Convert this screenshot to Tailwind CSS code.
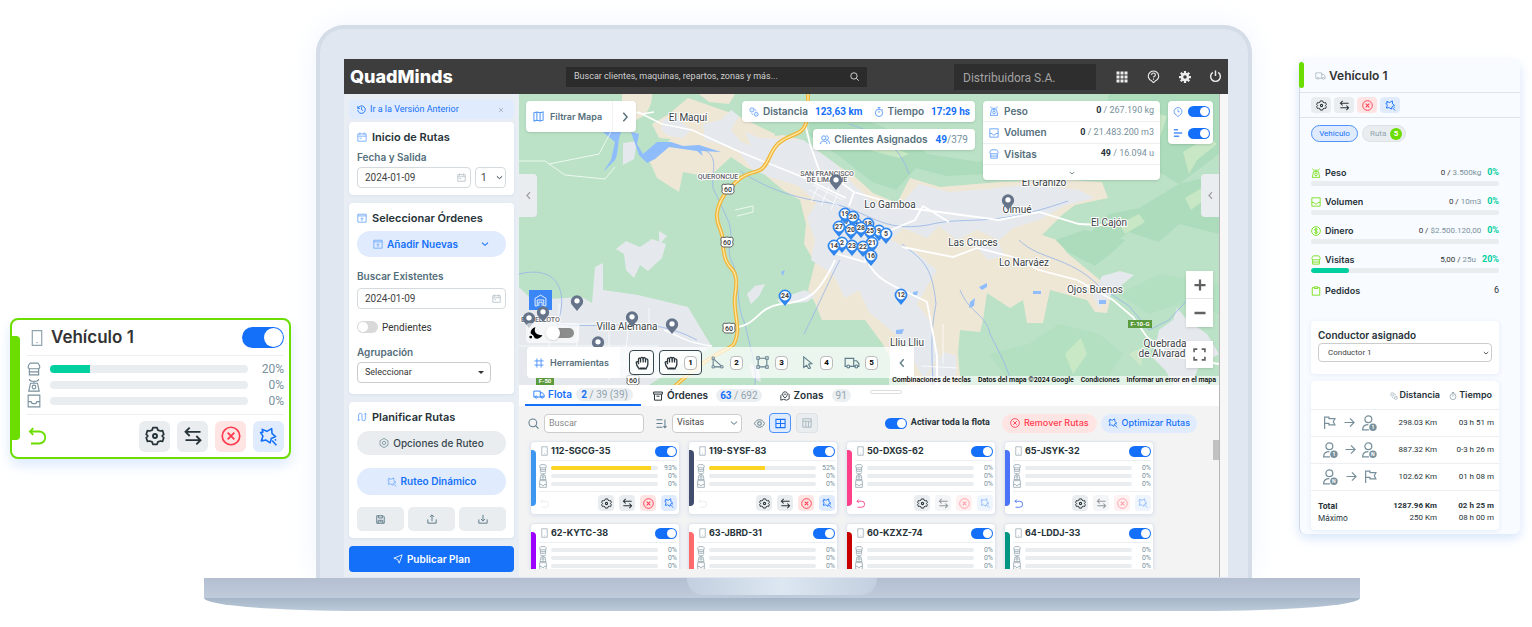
<!doctype html>
<html lang="es">

<head>
  <meta charset="UTF-8" />
  <meta name="viewport" content="width=device-width, initial-scale=1.0" />
  <title>QuadMinds</title>
  <script src="https://cdn.jsdelivr.net/npm/@tailwindcss/browser@4"></script>
</head>

<body class="bg-white font-['Inter',sans-serif] text-[#263238] overflow-x-hidden">

  <!-- icon sprite -->
  <svg class="hidden">
    <defs>
      <symbol id="phone" viewBox="0 0 14 20"><path d="M1.5 1.5h11v17h-11zM6.3 15.5h1.4" fill="none" stroke="currentColor" stroke-width="1.4"/></symbol>
      <symbol id="store" viewBox="0 0 24 24"><path d="M5.500 2h13c2 2 3.500 4 3.500 6.500 0 2-1.500 3-3 3H5c-1.500 0-3-1-3-3C2 6 3.500 4 5.500 2zM4 11.500V22h16V11.500M4 17h16" fill="none" stroke="currentColor" stroke-width="1.9"/></symbol>
      <symbol id="scale" viewBox="0 0 24 24"><path d="M4 1.500c0 3 2 4 8 4s8-1 8-4M12 5.500V9M6 9h12l3 13.500H3z" fill="none" stroke="currentColor" stroke-width="1.900"/><circle cx="12" cy="15.500" r="3.200" fill="none" stroke="currentColor" stroke-width="1.900"/></symbol>
      <symbol id="box" viewBox="0 0 24 24"><path d="M2 2h20v20H2zM2 13h5c1 5 9 5 10 0h5" fill="none" stroke="currentColor" stroke-width="1.9"/></symbol>
      <symbol id="undo" viewBox="0 0 24 24"><path d="M7 1.5L2.5 6 7 10.5M3 6h12a8 8 0 010 16H4" fill="none" stroke="currentColor" stroke-width="2.4"/></symbol>
      <symbol id="gear" viewBox="0 0 24 24"><path d="M9.5 2h5l1 3 3 1 2.500-.5 1.500 4.500-2 2 2 2-1.500 4.500L18.500 18l-3 1-1 3h-5l-1-3-3-1-2.500.5L1.500 14l2-2-2-2L3 5.500l2.500.5 3-1z" fill="none" stroke="currentColor" stroke-width="2.1" stroke-linejoin="round"/><circle cx="12" cy="12" r="2.4" fill="none" stroke="currentColor" stroke-width="2.3"/></symbol>
      <symbol id="swap" viewBox="0 0 24 24"><path d="M21 7H3M8 2L3 7l5 5M3 17h18M16 12l5 5-5 5" fill="none" stroke="currentColor" stroke-width="2.2"/></symbol>
      <symbol id="cross" viewBox="0 0 24 24"><path d="M8 8l8 8M16 8l-8 8" stroke="currentColor" stroke-width="2.2"/><circle cx="12" cy="12" r="10.5" fill="none" stroke="currentColor" stroke-width="2"/></symbol>
      <symbol id="wand" viewBox="0 0 24 24"><path d="M4 3l6 2.500L16 2l.5 6.500L21 12l-5.500 2.500L14 20l-5-3.500-6 1L5 11.500 2 7l3-.5zM16.500 17l5.500 6M20 15.500l1.500 1.500" fill="none" stroke="currentColor" stroke-width="2" stroke-linejoin="round"/></symbol>
      <symbol id="history" viewBox="0 0 24 24"><path d="M2 3v6h6M3 8a10 10 0 11-1 5M12 6v6l4 3" fill="none" stroke="currentColor" stroke-width="2.3"/></symbol>
      <symbol id="close" viewBox="0 0 24 24"><path d="M4 4l16 16M20 4L4 20" stroke="currentColor" stroke-width="2.8"/></symbol>
      <symbol id="cal" viewBox="0 0 24 24"><path d="M2 4.5h20V22H2zM2 10h20M7 1v6M17 1v6M6 15h5" fill="none" stroke="currentColor" stroke-width="2.1"/></symbol>
      <symbol id="order" viewBox="0 0 24 24"><path d="M2 3h20v19H2zM2 7h20M12 19v-7M8.5 14.5L12 11l3.500 3.500" fill="none" stroke="currentColor" stroke-width="2.1"/></symbol>
      <symbol id="down" viewBox="0 0 24 24"><path d="M3 8l9 8 9-8" fill="none" stroke="currentColor" stroke-width="3.2"/></symbol>
      <symbol id="left" viewBox="0 0 24 24"><path d="M16 3l-8 9 8 9" fill="none" stroke="currentColor" stroke-width="3.4"/></symbol>
      <symbol id="right" viewBox="0 0 24 24"><path d="M8 2l9 10-9 10" fill="none" stroke="currentColor" stroke-width="3.4"/></symbol>
      <symbol id="route" viewBox="0 0 24 24"><path d="M4 21V7a4 4 0 018 0v10a4 4 0 008 0V3M1 18l3 3 3-3M17 6l3-3 3 3" fill="none" stroke="currentColor" stroke-width="2.2"/></symbol>
      <symbol id="hex" viewBox="0 0 24 24"><path d="M12 1l9.500 5.500v11L12 23l-9.500-5.500v-11z" fill="none" stroke="currentColor" stroke-width="2"/><circle cx="12" cy="12" r="4" fill="none" stroke="currentColor" stroke-width="2"/></symbol>
      <symbol id="save" viewBox="0 0 24 24"><path d="M2 2h17l3 3v17H2zM7 2v6h10V2M6 22v-8h12v8M9 18h6" fill="none" stroke="currentColor" stroke-width="2.6"/></symbol>
      <symbol id="upload" viewBox="0 0 24 24"><path d="M2 13v9h20v-9M12 17V3M7 7l5-5 5 5" fill="none" stroke="currentColor" stroke-width="2.4"/></symbol>
      <symbol id="download" viewBox="0 0 24 24"><path d="M2 13v9h20v-9M12 2v14M7 12l5 5 5-5" fill="none" stroke="currentColor" stroke-width="2.4"/></symbol>
      <symbol id="send" viewBox="0 0 24 24"><path d="M2 10L22 2l-7 20-4-9z" fill="none" stroke="currentColor" stroke-width="2" stroke-linejoin="round"/></symbol>
      <symbol id="map" viewBox="0 0 24 24"><path d="M2 4l6.500-2 7 2L22 2v18l-6.500 2-7-2L2 22zM8.500 2v18M15.500 4v18" fill="none" stroke="currentColor" stroke-width="2.2"/></symbol>
      <symbol id="nodes" viewBox="0 0 24 24"><g fill="none" stroke="currentColor" stroke-width="1.9"><circle cx="7" cy="7" r="5"/><circle cx="17.500" cy="17.500" r="4.500"/><path d="M7 6v2M17.500 16.500v2M6 15l4 4M13 5l5 5"/></g></symbol>
      <symbol id="watch" viewBox="0 0 24 24"><circle cx="12" cy="14" r="8.800" fill="none" stroke="currentColor" stroke-width="2"/><path d="M12 14V9M8.500 1.500h7M19 5l2 2M12 2v3" fill="none" stroke="currentColor" stroke-width="2"/></symbol>
      <symbol id="users" viewBox="0 0 24 24"><g fill="none" stroke="currentColor" stroke-width="2.1"><circle cx="9" cy="7" r="5"/><path d="M1 22c0-10 16-10 16 0M15 2c7 0 7 10 0 10 5 0 8 4 8 9"/></g></symbol>
      <symbol id="pinclock" viewBox="0 0 24 24"><path d="M12 23l-4-3.500a9.500 9.500 0 118 0zM12 6v5.500h4" fill="none" stroke="currentColor" stroke-width="2"/></symbol>
      <symbol id="bars" viewBox="0 0 24 24"><path d="M2 4h10M2 12h20M2 20h13" stroke="currentColor" stroke-width="3.5"/></symbol>
      <symbol id="apps" viewBox="0 0 24 24"><path d="M1 4h6M9 4h6M17 4h6M1 12h6M9 12h6M17 12h6M1 20h6M9 20h6M17 20h6" stroke="currentColor" stroke-width="6"/></symbol>
      <symbol id="help" viewBox="0 0 24 24"><path d="M12 23.500l-3-3a9.500 9.500 0 116 0zM8.500 9c0-4.500 7-4.500 7 0 0 2.500-3.500 2.500-3.500 5M12 15.500V18" fill="none" stroke="currentColor" stroke-width="2"/></symbol>
      <symbol id="cog" viewBox="0 0 24 24"><path d="M12 0v24M0 12h24M3.500 3.500l17 17M20.500 3.500l-17 17" stroke="currentColor" stroke-width="4.500"/><circle cx="12" cy="12" r="6" fill="none" stroke="currentColor" stroke-width="5"/><circle cx="12" cy="12" r="3.500" fill="#3d3d3d"/></symbol>
      <symbol id="power" viewBox="0 0 24 24"><path d="M7 4.500a9 9 0 1010 0M12 1v10" fill="none" stroke="currentColor" stroke-width="2.700"/></symbol>
      <symbol id="search" viewBox="0 0 24 24"><circle cx="10.500" cy="10.500" r="8.500" fill="none" stroke="currentColor" stroke-width="2.2"/><path d="M17 17l6 6" stroke="currentColor" stroke-width="2.4"/></symbol>
      <symbol id="hand" viewBox="0 0 24 24"><path d="M7 22c-3-4-5-8-5-11 0-2 3-2 4 0V6c0-3 3-3 3.500-1C10 1.500 13.500 1.500 14 4c1-2 4-1.500 4 1.500 2-1.500 4 0 4 2V14c0 3-2 5-3 8z" fill="#fff" stroke="currentColor" stroke-width="2.2"/><path d="M9.500 5v6M14 4v7M18 6v5M6 11v3M8 21h10" stroke="currentColor" stroke-width="2.2"/></symbol>
      <symbol id="angle" viewBox="0 0 24 24"><path d="M4 5v15h17L4 5" fill="none" stroke="currentColor" stroke-width="2"/><path d="M2 2h4v4H2zM2 18h4v4H2zM18 18h4v4h-4z" fill="#fff" stroke="currentColor" stroke-width="1.700"/></symbol>
      <symbol id="poly" viewBox="0 0 24 24"><path d="M4 4h16v16H4z" fill="none" stroke="currentColor" stroke-width="2"/><path d="M1.500 1.500h4.500v4.500h-4.500zM18 1.500h4.500v4.500H18zM1.500 18h4.500v4.500h-4.500zM18 18h4.500v4.500H18z" fill="#fff" stroke="currentColor" stroke-width="1.900"/></symbol>
      <symbol id="cursor" viewBox="0 0 24 24"><path d="M5 1.500L20 14l-6 1 3.500 7-3.500 1.500L10.500 17 5 21z" fill="none" stroke="currentColor" stroke-width="2"/></symbol>
      <symbol id="truck" viewBox="0 0 28 20"><path d="M5 16H2V2h15v14H10M17 6h5l4 5v5h-2M17 16h3" fill="none" stroke="currentColor" stroke-width="2"/><circle cx="7.500" cy="16" r="2.500" fill="none" stroke="currentColor" stroke-width="2"/><circle cx="21.500" cy="16" r="2.500" fill="none" stroke="currentColor" stroke-width="2"/></symbol>
      <symbol id="archive" viewBox="0 0 24 24"><path d="M1.500 2.500h21v5h-21zM3.500 8v14h17V8M8.500 12.500h7" fill="none" stroke="currentColor" stroke-width="2.400"/></symbol>
      <symbol id="zone" viewBox="0 0 24 24"><path d="M12 17c-8-7-7-15 0-15s8 8 0 15zM5 8l-3 3v11l6-2 8 2 6-3V8l-2-1" fill="none" stroke="currentColor" stroke-width="2.100"/><circle cx="12" cy="8" r="1.800" fill="currentColor"/></symbol>
      <symbol id="sort" viewBox="0 0 24 24"><path d="M1 4h13M1 12h13M1 20h13M19.500 3v18M16 17.500l3.500 4 3.500-4" fill="none" stroke="currentColor" stroke-width="2.200"/></symbol>
      <symbol id="eye" viewBox="0 0 24 24"><path d="M1 12C6 1 18 1 23 12 18 23 6 23 1 12z" fill="none" stroke="currentColor" stroke-width="2"/><circle cx="12" cy="12" r="4" fill="none" stroke="currentColor" stroke-width="2.200"/></symbol>
      <symbol id="grid" viewBox="0 0 24 24"><path d="M2 3h20v18H2zM12 3v18M2 12h20" fill="none" stroke="currentColor" stroke-width="2.300"/></symbol>
      <symbol id="table" viewBox="0 0 24 24"><path d="M2 2h20v20H2zM2 8h20M9 8v14M15.500 8v14" fill="none" stroke="currentColor" stroke-width="2.300"/></symbol>
      <symbol id="flag" viewBox="0 0 24 24"><path d="M3 24V2h8v3h11l-3 5.500 3 6H11v-3H3" fill="none" stroke="currentColor" stroke-width="2.200"/></symbol>
      <symbol id="arrow" viewBox="0 0 24 24"><path d="M1 12h21M13 3l9 9-9 9" fill="none" stroke="currentColor" stroke-width="2.600"/></symbol>
      <symbol id="user" viewBox="0 0 26 28"><circle cx="11" cy="7.500" r="6" fill="none" stroke="currentColor" stroke-width="2.200"/><path d="M12 26H1c0-7 4-9 10-9" fill="none" stroke="currentColor" stroke-width="2.200"/><circle cx="19" cy="21.500" r="6.500" fill="currentColor"/></symbol>
      <symbol id="clip" viewBox="0 0 24 24"><path d="M8 4H3v18h18V4h-5M8 2h8v4H8z" fill="none" stroke="currentColor" stroke-width="2"/></symbol>
      <symbol id="coin" viewBox="0 0 24 24"><circle cx="12" cy="12" r="10.500" fill="none" stroke="currentColor" stroke-width="2"/><path d="M16 9c-1-3-8-3-8 0s8 3 8 6-7 3-8 0M12 4.500v15" fill="none" stroke="currentColor" stroke-width="2"/></symbol>
      <symbol id="moon" viewBox="0 0 24 24"><path d="M11 2c-3 7 0 13 12 14-3 5-9 7-13 5l-3-5-4-3C2 8 6 3 11 2z" fill="currentColor"/><circle cx="3" cy="19" r="2.500" fill="currentColor"/></symbol>
      <symbol id="hash" viewBox="0 0 24 24"><path d="M7 1v22M17 1v22M1 7h22M1 17h22" stroke="currentColor" stroke-width="2.200"/></symbol>
      <symbol id="plus" viewBox="0 0 24 24"><path d="M12 1v22M1 12h22" stroke="currentColor" stroke-width="4.500"/></symbol>
      <symbol id="minus" viewBox="0 0 24 24"><path d="M1 12h22" stroke="currentColor" stroke-width="5"/></symbol>
      <symbol id="full" viewBox="0 0 24 24"><path d="M2 8V2h6M16 2h6v6M22 16v6h-6M8 22H2v-6" fill="none" stroke="currentColor" stroke-width="3"/></symbol>
      <symbol id="depot" viewBox="0 0 24 24"><path d="M2 22V8l10-6 10 6v14h-4V11H6v11zM9 22v-7h6v7" fill="none" stroke="currentColor" stroke-width="1.600"/></symbol>
      <symbol id="pin-blue" viewBox="0 0 14 18"><path d="M7 18L2 12a6.800 6.800 0 1110 0z" fill="#2f86ee"/><circle cx="7" cy="7.200" r="4.900" fill="#fff"/></symbol>
      <symbol id="pin-gray" viewBox="0 0 14 18"><path d="M7 18L2 12a6.500 6.500 0 1110 0z" fill="#66748a"/><circle cx="7" cy="7.200" r="2.800" fill="#fff"/></symbol>
      <symbol id="shield" viewBox="0 0 14 12"><path d="M2 1l2 .5L7 1l3 .5L12 1l1.200 2-.5 3 .5 3-2 2H2.800l-2-2 .5-3-.5-3z" fill="#fff" stroke="#555" stroke-width=".9"/></symbol>
    </defs>
  </svg>

  <div class="flex items-start pl-[10px] pr-3 pt-[25px] pb-4">

    <!-- vehicle card -->
    <article class="relative z-10 mt-[293px] w-[281px] shrink-0 rounded-lg border-2 border-[#6bdd00] bg-white pl-[15px] pr-[5px] shadow-[0_6px_14px_#dbe9fd]">
      <div class="absolute left-0 top-4 h-[104px] w-2 rounded-r bg-[#6bdd00]"></div>
      <header class="flex h-9 items-center border-b border-[#eceff1]">
        <svg class="ml-1 mr-2 h-[18px] w-3 text-[#90a4ae]"><use href="#phone"/></svg>
        <h2 class="text-[17px] font-semibold text-[#333]">Vehículo 1</h2>
        <input type="checkbox" checked aria-label="Activar Vehículo 1" class="relative ml-auto h-[21px] w-[42px] appearance-none rounded-full bg-[#1570f9] before:absolute before:right-px before:top-px before:size-[19px] before:rounded-full before:bg-white">
      </header>
      <div class="flex h-[59px] flex-col justify-center border-b border-[#eceff1] font-['Roboto',sans-serif] text-xs text-[#78909c]">
        <div class="flex h-4 items-center"><svg class="mr-[9px] size-[14px]"><use href="#store"/></svg><div class="h-2 flex-1 overflow-hidden rounded-full bg-[#e9edf0]"><div class="h-2 bg-[#00cfa0]" style="width:20%"></div></div><span class="w-9 text-right">20%</span></div>
        <div class="flex h-4 items-center"><svg class="mr-[9px] size-[14px]"><use href="#scale"/></svg><div class="h-2 flex-1 rounded-full bg-[#e9edf0]"></div><span class="w-9 text-right">0%</span></div>
        <div class="flex h-4 items-center"><svg class="mr-[9px] size-[14px]"><use href="#box"/></svg><div class="h-2 flex-1 rounded-full bg-[#e9edf0]"></div><span class="w-9 text-right">0%</span></div>
      </div>
      <footer class="flex h-[42px] items-center gap-[7px]">
        <button aria-label="Deshacer" class="mr-auto text-[#6bdd00]"><svg class="ml-px size-[18px]"><use href="#undo"/></svg></button>
        <button aria-label="Opciones" class="grid size-[31px] place-items-center rounded-md bg-[#e9edf0] text-[#263238]"><svg class="size-5"><use href="#gear"/></svg></button>
        <button aria-label="Intercambiar" class="grid size-[31px] place-items-center rounded-md bg-[#e9edf0] text-[#263238]"><svg class="size-5"><use href="#swap"/></svg></button>
        <button aria-label="Remover" class="grid size-[31px] place-items-center rounded-md bg-[#ffe4e4] text-[#ff3b4e]"><svg class="size-5"><use href="#cross"/></svg></button>
        <button aria-label="Optimizar" class="grid size-[31px] place-items-center rounded-md bg-[#e0ecfd] text-[#1570f9]"><svg class="size-[19px]"><use href="#wand"/></svg></button>
      </footer>
    </article>

    <!-- laptop -->
    <div class="ml-[25px] mr-[47px] min-w-0 flex-1">
      <div class="rounded-t-[28px] border-x-4 border-t-4 border-[#d3dce7] bg-[#e0e7f0] pb-px pl-6 pr-5 pt-[30px] shadow-[0_0_30px_#eef4fd]">
        <div class="bg-[#f3f3f3]">

          <!-- top bar -->
          <header class="flex h-[35px] items-center bg-[#3d3d3d] text-[#ededed]">
            <h1 class="w-[222px] pl-[6px] text-[18px] font-extrabold text-white">QuadMinds</h1>
            <label class="flex h-5 w-[301px] items-center bg-[#2b2b2b] px-2">
              <input aria-label="Buscar" placeholder="Buscar clientes, maquinas, repartos, zonas y más..." class="min-w-0 flex-1 bg-transparent font-['Roboto',sans-serif] text-[9px] placeholder:text-[#cfcfcf]">
              <svg class="size-[9px]"><use href="#search"/></svg>
            </label>
            <div class="ml-auto flex items-center pr-[6px]">
              <div class="mr-5 flex h-[26px] w-[142px] items-center bg-[#2e2e2e] pl-[9px] pt-[2px] font-['Roboto',sans-serif] text-[12px] text-[#a3a3a3]">Distribuidora S.A.</div>
              <button aria-label="Aplicaciones"><svg class="size-3"><use href="#apps"/></svg></button>
              <button aria-label="Ayuda" class="ml-[19px]"><svg class="size-[13px]"><use href="#help"/></svg></button>
              <button aria-label="Configuración" class="ml-[19px]"><svg class="size-3"><use href="#cog"/></svg></button>
              <button aria-label="Salir" class="ml-[18px]"><svg class="size-[13px]"><use href="#power"/></svg></button>
            </div>
          </header>

          <div class="flex">
            <!-- planning sidebar -->
            <aside class="w-[175px] shrink-0 bg-[#e9eef4] px-[5px] pt-[6px] pb-[5px] text-[10px]">
              <div class="mb-[3px] flex h-[19px] items-center rounded-sm bg-[#e0ecfd] px-2 font-['Roboto',sans-serif] text-[9px] text-[#1570f9]">
                <svg class="mr-[4px] size-[9px]"><use href="#history"/></svg><a href="#">Ir a la Versión Anterior</a>
                <button aria-label="Cerrar" class="ml-auto text-[#90a4ae]"><svg class="mr-[2px] size-[6px]"><use href="#close"/></svg></button>
              </div>

              <section class="mb-2 rounded bg-white px-2 pt-2 pb-[7px] shadow-[0_1px_3px_#d5e0ee]">
                <h2 class="mb-[6px] flex h-[14px] items-center text-[11px] font-semibold"><svg class="mr-[5px] size-[10px] text-[#6fa8fb]"><use href="#cal"/></svg>Inicio de Rutas</h2>
                <label for="fecha" class="mb-[3px] block h-[14px] font-semibold leading-[14px] text-[#546e7a]">Fecha y Salida</label>
                <div class="flex gap-1">
                  <div class="flex h-[21px] min-w-0 flex-1 items-center rounded-sm border border-[#d5dade] px-[7px]">
                    <input id="fecha" value="2024-01-09" class="min-w-0 flex-1 font-['Roboto',sans-serif] text-[10px] text-[#444]"><svg class="mr-[-3px] size-[9px] text-[#b0bec5]"><use href="#cal"/></svg>
                  </div>
                  <div class="relative flex h-[21px] w-[31px] items-center rounded-sm border border-[#d5dade]">
                    <select aria-label="Salida" class="w-full appearance-none pl-[5px] font-['Roboto',sans-serif] text-[#444]"><option>1</option></select>
                    <svg class="pointer-events-none absolute right-[2px] size-[7px]"><use href="#down"/></svg>
                  </div>
                </div>
              </section>

              <section class="mb-2 rounded bg-white px-2 pt-2 pb-[11px] shadow-[0_1px_3px_#d5e0ee]">
                <h2 class="mb-[6px] flex h-[14px] items-center text-[11px] font-semibold"><svg class="mr-[5px] size-[10px] text-[#6fa8fb]"><use href="#order"/></svg>Seleccionar Órdenes</h2>
                <button class="mb-3 flex h-[26px] w-full items-center rounded-full bg-[#e0ecfd] pl-4 pr-[17px] font-semibold text-[#1570f9]"><svg class="mr-[4px] size-[10px] text-[#6fa8fb]"><use href="#order"/></svg>Añadir Nuevas<svg class="ml-auto size-[8px]"><use href="#down"/></svg></button>
                <label for="buscar-fecha" class="mb-[5px] block h-[14px] font-semibold leading-[14px] text-[#546e7a]">Buscar Existentes</label>
                <div class="mb-[11px] flex h-[21px] items-center rounded-sm border border-[#d5dade] px-[7px]">
                  <input id="buscar-fecha" value="2024-01-09" class="min-w-0 flex-1 font-['Roboto',sans-serif] text-[10px] text-[#444]"><svg class="mr-[-3px] size-[9px] text-[#b0bec5]"><use href="#cal"/></svg>
                </div>
                <label class="mb-[11px] flex h-[14px] items-center gap-1 font-['Roboto',sans-serif] text-[#333]">
                  <input type="checkbox" class="relative h-3 w-[21px] appearance-none rounded-full bg-[#d9d9d9] before:absolute before:left-px before:top-px before:size-[10px] before:rounded-full before:bg-white">Pendientes
                </label>
                <label for="agrupacion" class="mb-[3px] block h-[14px] font-semibold leading-[14px] text-[#546e7a]">Agrupación</label>
                <div class="relative flex h-[21px] w-[134px] items-center rounded-sm border border-[#ccc]">
                  <select id="agrupacion" class="w-full appearance-none pl-[7px] font-['Roboto',sans-serif] text-[9px] text-[#333]"><option>Seleccionar</option></select>
                  <span class="pointer-events-none absolute right-[6px] border-x-[3px] border-t-[3px] border-x-transparent border-t-[#333]"></span>
                </div>
              </section>

              <section class="mb-2 rounded bg-white px-2 pt-2 pb-[7px] shadow-[0_1px_3px_#d5e0ee]">
                <h2 class="mb-[7px] flex h-[14px] items-center text-[11px] font-semibold"><svg class="mr-[5px] size-[10px] text-[#6fa8fb]"><use href="#route"/></svg>Planificar Rutas</h2>
                <button class="mb-[13px] flex h-6 w-full items-center justify-center rounded-full bg-[#e9edf0] font-medium text-[#37474f]"><svg class="mr-1 size-[10px] text-[#78909c]"><use href="#hex"/></svg>Opciones de Ruteo</button>
                <button class="mb-3 flex h-[27px] w-full items-center justify-center rounded-full bg-[#e0ecfd] font-semibold text-[#1570f9]"><svg class="mr-1 size-[10px] text-[#6fa8fb]"><use href="#wand"/></svg>Ruteo Dinámico</button>
                <div class="grid grid-cols-3 gap-1 text-[#607d8b]">
                  <button aria-label="Guardar" class="grid h-6 place-items-center rounded-[5px] bg-[#e9edf0]"><svg class="size-[9px]"><use href="#save"/></svg></button>
                  <button aria-label="Subir" class="grid h-6 place-items-center rounded-[5px] bg-[#e9edf0]"><svg class="size-[10px]"><use href="#upload"/></svg></button>
                  <button aria-label="Bajar" class="grid h-6 place-items-center rounded-[5px] bg-[#e9edf0]"><svg class="size-[10px]"><use href="#download"/></svg></button>
                </div>
              </section>

              <button class="flex h-[26px] w-full items-center justify-center rounded-sm bg-[#1570f9] font-semibold text-white"><svg class="mr-1 size-[10px]"><use href="#send"/></svg>Publicar Plan</button>
            </aside>

            <main class="min-w-0 flex-1">
              <!-- map -->
              <div class="relative h-[291px] overflow-hidden bg-[#bbe2c6]">
                <svg class="absolute inset-0 size-full" viewBox="0 0 700 291" preserveAspectRatio="xMidYMid slice" font-family="Roboto, sans-serif">
                  <g fill="#efe7d6">
                    <path d="M103 0h30c0 14-6 22-16 26l-14 3zM180 0h36l-6 10-20-2z"/>
                    <path d="M169 4L150 20l-17 10 7 14 12 1-22 21 8 18 22 14 4-20 26 5 22-20 16 11 28-14V40l-41-20z"/>
                    <path d="M221 36L241 44 264 41 284 46 318 71 334 81 354 99 378 109 391 84 421 93 481 88 543 86 583 88 589 104 556 111 543 121 523 141 538 146 548 159 581 186 591 206 588 219 576 218 568 206 531 196 524 229 508 229 504 206 491 214 468 199 464 226 461 238 441 236 439 259 441 283 442 291H388L379 279 363 249 346 226 303 226 296 209 289 196 296 169 285 150 287 130 281 106 264 96 245 80 228 74z"/>
                  </g>
                  <g fill="#e5e9ee">
                    <path d="M0 193l13 13 50-3 10 6 3-36 8-4v27l35 5 50 12 24 40-18 9-45 29H0z"/>
                    <path d="M97 155l10-8 14 6 12-8 14 5-4 14-14 13-8-6-6 13-8-8-2-16zM104 49l14-2-3 18-11 6zM140 137l8 5-8 9zM228 200l8-8 10-2-6 12-8 8z"/>
                    <path d="M144 26l12-6 8 10 8 6-8 8-14-2-8-6zM184 30l18-4 10-10 8 6-8 14 10 12 24 8 14 14-10 12-16-6-14-18-20-8-14-4z"/>
                    <path d="M226 38L241 44 284 46 318 71 334 90 354 108 380 112 400 90 430 98 470 95 510 90 560 96 575 104 545 112 520 126 494 134 480 146 458 136 438 146 420 132 408 144 384 134 372 146 396 158 418 176 408 192 398 210 412 228 420 262 405 285 392 262 376 240 350 218 340 196 326 204 314 180 292 166 296 146 288 124 298 108 280 92 248 82 236 60z"/>
                    <path d="M455 150l24-4 6 16-16 4zM583 182l18-5 14 4-16 13-19 20-6-12zM640 236l14-10 4-12 10 12 20 14 12 20-20 12-8 20h-16l-10-16-12-12zM425 258l12 4v18l-10 11h-24z"/>
                    <path d="M258 206l28-10 10 6-8 6-26 2zM230 270l10 4 2 14-8-4z"/>
                  </g>
                  <!-- hills -->
                  <g fill="#a2d9b4" opacity=".6">
                    <path d="M289 14c40 6 80 14 120 46l50 8 40-18 20 12-12 16-80 4-30-8-20 22-24-8-30-24-32-22zM590 0h110v60l-40 30-30-18-30 8-20-30zM560 150l30-30 30-6 40-24 40-10v60l-40-10-20 18-30-10-20 14zM536 146l30-10 40 10-10 10-20 16-24-12z"/>
                  </g>
                  <path d="M470 260l40-10 30-20 40 10 24 20-20 31h-90zM600 200l40-20 60 10v30l-40-10-30 10z" fill="#a2d9b4" opacity=".3"/>
                  <g fill="#d3ebc9" opacity=".7">
                    <path d="M664 58l26-16 8 8-20 16-8 14zM546 260l16-16 6 16-14 20zM666 104l20-12 4 10-18 14zM610 260l16-8-4 20zM630 40l10-20 8 2-8 24zM600 130l20-10 6 8-20 12z"/>
                    <path d="M300 36l40 4 50 20-10 4-60-16z"/>
                  </g>
                  <!-- water -->
                  <g fill="#8fbcfb">
                    <path d="M84 38h18c-4 10-2 20-6 28l-12 12 8-12 4-18zM112 38l8 2-2 10 6 10 14-12 14 0 12 4 16-1 22 7-20-1 2 5-6-5-14-2-14-2-14 12-8 4-8-8z"/>
                    <path d="M460 193l8-4v4l-5 3zM451 208l5-4-1 8-5 2zM377 236l8-1-2 5h-6zM514 197h8v3h-8zM580 206h7v4h-7zM262 178l4-2-2 6zM394 198l5-1-1 4h-4z"/>
                  </g>
                  <path d="M182 54c20 8 10 24 12 40l14 30c10 20-4 30 6 46 8 20 2 40 12 60 4 20 12 40 10 61M221 77c30 20 60 28 90 32 40 8 50 30 98 22 40-10 60 4 140-24M285 240c20-40 28-60 36-74M0 180c40-10 50 20 38 50 60 6 90-10 140 16M383 150c20 16 30 20 34 60-6 30-4 50-3 81M441 196c10 24 26 24 30 44 10 20 18 34 22 51M500 146c20 20 50 16 80 46l30 20 20 24 20-10 40-44M330 30c30 10 50 20 60 50" fill="none" stroke="#9db9e6" stroke-width=".9"/>
                  <!-- local roads -->
                  <g fill="none" stroke="#fff">
                    <path d="M0 67h26l20 14 40 4 10-12M30 70l50-10 14-26M40 210v20h90v-16M30 240v46M60 230l-6 50M90 236v50M110 230l-6 50M0 252h140M10 270h110M290 96l30 16M294 91l30 15M300 90l-8 18M310 92l-8 20M320 96l-8 20M424 230v40M402 272l36 2M216 116l18-4v6l-16 4" stroke-width=".9" opacity=".8"/>
                    <path d="M285 26L291 50 300 76 324 90 335 98 330 112M335 98L390 114 480 126 520 118 560 130 600 132M212 234C240 232 236 214 262 210 290 208 300 200 316 166M318 160L346 168 348 152M350 170C360 190 386 196 408 208L414 240 418 262 418 291M383 153L434 163 458 154 494 163 520 176 558 186 594 206 614 223 628 243 652 262 700 270M372 136L396 126 404 112M404 112L430 128" stroke-width="1.8"/>
                    <path d="M103 14l20 6 12-2M119 18l24 12 30 6 48 22 60 24 46 22M145 236c20 8 20 12 48 16" stroke-width="1.5"/>
                  </g>
                  <!-- route 60 -->
                  <path d="M289 0c0 20 0 30-6 36s-18 6-26 16-8 20-16 24-14 2-24 12-8 6-10 10-8 10-9 22 6 16 6 28 2 20 8 26 6 14 4 28 4 26 2 38-4 12-16 18-34 22-50 38-24 12-44 12-60-6-118-12" fill="none" stroke="#f0b73c" stroke-width="4"/>
                  <path d="M289 0c0 20 0 30-6 36s-18 6-26 16-8 20-16 24-14 2-24 12-8 6-10 10-8 10-9 22 6 16 6 28 2 20 8 26 6 14 4 28 4 26 2 38-4 12-16 18-34 22-50 38-24 12-44 12-60-6-118-12" fill="none" stroke="#fde7a4" stroke-width="1.3"/>
                  <g font-size="7" font-weight="500" text-anchor="middle" fill="#333">
                    <use href="#shield" x="202" y="89" width="14" height="12"/><text x="209" y="98">60</text>
                    <use href="#shield" x="201" y="142" width="14" height="12"/><text x="208" y="151">60</text>
                    <use href="#shield" x="203" y="228" width="14" height="12"/><text x="210" y="237">60</text>
                    <use href="#shield" x="107" y="280" width="14" height="12"/><text x="114" y="289">60</text>
                  </g>
                  <rect x="609" y="226" width="24" height="8" fill="#5b9a3d"/><rect x="17" y="283" width="18" height="8" fill="#5b9a3d"/>
                  <g fill="#fff" font-size="6" font-weight="700" text-anchor="middle"><text x="621" y="232">F-10-G</text><text x="26" y="289">F-50</text></g>
                  <g fill="#3a3f45" stroke="#fff" stroke-width="2" paint-order="stroke" stroke-linejoin="round" font-size="10" text-anchor="middle">
                    <text x="169" y="27">El Maquí</text>
                    <text x="371" y="114">Lo Gamboa</text>
                    <text x="454" y="152">Las Cruces</text>
                    <text x="505" y="172">Lo Narváez</text>
                    <text x="576" y="199">Ojos Buenos</text>
                    <text x="525" y="92">El Granizo</text>
                    <text x="498" y="119">Olmué</text>
                    <text x="590" y="132">El Cajón</text>
                    <text x="108" y="236">Villa Alemana</text>
                    <text x="388" y="252">Lliu Lliu</text>
                    <text x="646" y="253">Quebrada</text>
                    <text x="643" y="263">de Alvarad</text>
                    <g font-size="7" font-weight="500" fill="#5f6368">
                      <text x="199" y="85">QUERONCUE</text>
                      <text x="308" y="82">SAN FRANCISCO</text>
                      <text x="308" y="88">DE LIMACHE</text>
                      <text x="2" y="228" text-anchor="start">EL BELLOTO</text>
                    </g>
                  </g>
                  <rect x="10" y="196" width="23" height="20" fill="#3a86f7"/>
                  <use href="#depot" x="15" y="200" width="13" height="13" color="#fff"/>
                  <g id="pins" font-size="7" font-weight="700" text-anchor="middle" fill="#444"></g>
                </svg>

                <!-- top overlays -->
                <div class="absolute left-[7px] right-[6px] top-[7px] flex items-start gap-2 text-[10px] font-semibold text-[#546e7a]">
                  <div class="flex h-[31px] w-[110px] items-center rounded-sm bg-white text-[9px] shadow-sm">
                    <svg class="ml-[7px] mr-[6px] size-[11px] text-[#4d93fb]"><use href="#map"/></svg>Filtrar Mapa
                    <button aria-label="Abrir filtro" class="ml-auto grid h-full w-6 place-items-center border-l border-[#f0f2f4]"><svg class="size-[10px]"><use href="#right"/></svg></button>
                  </div>
                  <div class="ml-auto flex flex-col items-end gap-[7px]">
                    <div class="flex h-[21px] items-center rounded-sm bg-white shadow-sm">
                      <svg class="ml-[7px] mr-1 size-[10px] text-[#4d93fb]"><use href="#nodes"/></svg>Distancia<b class="ml-[7px] mr-[5px] font-['Roboto',sans-serif] font-bold text-[#1570f9]">123,63 km</b>
                      <svg class="ml-[6px] mr-1 size-[10px] text-[#4d93fb]"><use href="#watch"/></svg>Tiempo<b class="ml-[7px] mr-[5px] font-['Roboto',sans-serif] font-bold text-[#1570f9]">17:29 hs</b>
                    </div>
                    <div class="flex h-[21px] items-center rounded-sm bg-white px-[7px] shadow-sm">
                      <svg class="mr-1 size-[10px] text-[#4d93fb]"><use href="#users"/></svg>Clientes Asignados<span class="ml-2 font-['Roboto',sans-serif] font-normal text-[#78909c]"><b class="text-[#1570f9]">49</b>/379</span>
                    </div>
                  </div>
                  <div class="w-[177px] rounded-sm bg-white shadow-sm">
                    <div class="flex h-[21px] items-center border-b border-[#eceff1] px-[6px]"><svg class="mr-[5px] size-[10px] text-[#4d93fb]"><use href="#scale"/></svg>Peso<span class="ml-auto font-['Roboto',sans-serif] text-[9px] font-normal text-[#78909c]"><b class="text-[#263238]">0</b> / 267.190 kg</span></div>
                    <div class="flex h-[22px] items-center border-b border-[#eceff1] px-[6px]"><svg class="mr-[5px] size-[10px] text-[#4d93fb]"><use href="#box"/></svg>Volumen<span class="ml-auto font-['Roboto',sans-serif] text-[9px] font-normal text-[#78909c]"><b class="text-[#263238]">0</b> / 21.483.200 m3</span></div>
                    <div class="flex h-[21px] items-center border-b border-[#eceff1] px-[6px]"><svg class="mr-[5px] size-[10px] text-[#4d93fb]"><use href="#store"/></svg>Visitas<span class="ml-auto font-['Roboto',sans-serif] text-[9px] font-normal text-[#78909c]"><b class="text-[#263238]">49</b> / 16.094 u</span></div>
                    <button aria-label="Ver más" class="grid h-[15px] w-full place-items-center"><svg class="size-[6px]"><use href="#down"/></svg></button>
                  </div>
                  <div class="w-[45px] rounded-sm bg-white pl-[5px] pr-[3px] text-[#4d93fb] shadow-sm">
                    <label class="flex h-[21px] items-center justify-between"><svg class="size-[10px]"><use href="#pinclock"/></svg><input type="checkbox" checked aria-label="Horarios" class="relative h-[11px] w-[22px] appearance-none rounded-full bg-[#1570f9] before:absolute before:right-px before:top-px before:size-[9px] before:rounded-full before:bg-white"></label>
                    <label class="flex h-[22px] items-center justify-between"><svg class="size-[10px]"><use href="#bars"/></svg><input type="checkbox" checked aria-label="Totales" class="relative h-[11px] w-[22px] appearance-none rounded-full bg-[#1570f9] before:absolute before:right-px before:top-px before:size-[9px] before:rounded-full before:bg-white"></label>
                  </div>
                </div>

                <button aria-label="Ocultar panel" class="absolute left-0 top-[80px] grid h-[43px] w-[18px] place-items-center rounded-r-sm bg-[#eaedf0] text-[#9e9e9e]"><svg class="size-[9px]"><use href="#left"/></svg></button>
                <button aria-label="Mostrar panel" class="absolute right-0 top-[80px] grid h-[43px] w-[18px] place-items-center rounded-l-sm bg-[#eaedf0] text-[#9e9e9e]"><svg class="size-[9px]"><use href="#left"/></svg></button>

                <label class="absolute bottom-[42px] left-[7px] flex h-5 w-[53px] items-center rounded-sm bg-white/60 px-[3px] text-black">
                  <svg class="size-[14px]"><use href="#moon"/></svg>
                  <input type="checkbox" aria-label="Modo oscuro" class="relative ml-[7px] h-[10px] w-6 appearance-none rounded-full bg-[#8c8c8c] before:absolute before:-left-1 before:-top-[2px] before:size-[14px] before:rounded-full before:bg-white before:shadow">
                </label>

                <!-- tools -->
                <div class="absolute bottom-[7px] left-[8px] flex h-[31px] items-center rounded bg-white/70 text-[#607d8b]">
                  <div class="flex h-full w-[93px] items-center rounded-l bg-white pl-[7px] text-[9px] font-semibold text-[#546e7a]"><svg class="mr-[6px] size-[10px] text-[#4d93fb]"><use href="#hash"/></svg>Herramientas</div>
                  <button aria-label="Mover" class="ml-[9px] grid h-[25px] w-[25px] place-items-center rounded border border-[#37474f] bg-white/60 text-[#263238]"><svg class="size-[14px]"><use href="#hand"/></svg></button>
                  <button aria-label="Mover 1" class="ml-[5px] flex h-[25px] w-[43px] items-center justify-between rounded border border-[#37474f] bg-white/60 px-1 text-[#263238]"><svg class="size-[14px]"><use href="#hand"/></svg><kbd class="h-[14px] w-[13px] rounded-sm border border-[#bbb] bg-white text-center font-['Roboto',sans-serif] text-[8px] font-bold leading-3 text-black">1</kbd></button>
                  <button class="ml-[9px] flex w-8 items-center justify-between"><svg class="size-[13px]"><use href="#angle"/></svg><kbd class="h-[14px] w-[13px] rounded-sm border border-[#bbb] bg-white text-center font-['Roboto',sans-serif] text-[8px] font-bold leading-3 text-black">2</kbd></button>
                  <button class="ml-[13px] flex w-8 items-center justify-between"><svg class="size-[13px]"><use href="#poly"/></svg><kbd class="h-[14px] w-[13px] rounded-sm border border-[#bbb] bg-white text-center font-['Roboto',sans-serif] text-[8px] font-bold leading-3 text-black">3</kbd></button>
                  <button class="ml-[13px] flex w-8 items-center justify-between"><svg class="size-[13px]"><use href="#cursor"/></svg><kbd class="h-[14px] w-[13px] rounded-sm border border-[#bbb] bg-white text-center font-['Roboto',sans-serif] text-[8px] font-bold leading-3 text-black">4</kbd></button>
                  <button class="ml-[11px] flex w-[34px] items-center justify-between"><svg class="h-3 w-4"><use href="#truck"/></svg><kbd class="h-[14px] w-[13px] rounded-sm border border-[#bbb] bg-white text-center font-['Roboto',sans-serif] text-[8px] font-bold leading-3 text-black">5</kbd></button>
                  <button aria-label="Plegar" class="ml-3 grid h-full w-6 place-items-center bg-white"><svg class="size-[10px]"><use href="#left"/></svg></button>
                </div>

                <div class="absolute bottom-[17px] right-[6px] flex flex-col gap-[14px] text-[#616161]">
                  <div class="w-[27px] divide-y divide-[#e6e6e6] bg-white shadow-sm">
                    <button aria-label="Acercar" class="grid h-7 w-full place-items-center"><svg class="size-3"><use href="#plus"/></svg></button>
                    <button aria-label="Alejar" class="grid h-7 w-full place-items-center"><svg class="size-3"><use href="#minus"/></svg></button>
                  </div>
                  <button aria-label="Pantalla completa" class="grid size-[27px] place-items-center bg-white shadow-sm"><svg class="size-[13px]"><use href="#full"/></svg></button>
                </div>
                <div class="absolute bottom-0 right-0 flex h-[9px] items-center gap-[7px] bg-white/60 px-[3px] font-['Roboto',sans-serif] text-[7px] font-medium leading-none text-black">
                  <span>Combinaciones de teclas</span><span>Datos del mapa ©2024 Google</span><a href="#">Condiciones</a><a href="#">Informar un error en el mapa</a>
                </div>
              </div>

              <!-- fleet -->
              <nav class="flex h-[21px] items-stretch bg-white pl-[6px] text-[10px] font-semibold">
                <a href="#" class="flex w-[116px] items-center border-b-2 border-[#1570f9] pl-2 text-[#1570f9]"><svg class="mr-[3px] h-[9px] w-[12px]"><use href="#truck"/></svg>Flota<span class="ml-auto mr-2 rounded-full bg-[#eceff1] px-[5px] font-['Roboto',sans-serif] font-normal leading-[13px] text-[#90a4ae]"><b class="text-[#1570f9]">2</b> / 39 (39)</span></a>
                <a href="#" class="ml-3 flex items-center"><svg class="mr-1 size-[10px]"><use href="#archive"/></svg>Órdenes<span class="ml-2 rounded-full bg-[#eceff1] px-1 font-['Roboto',sans-serif] font-normal leading-[13px] text-[#90a4ae]"><b class="text-[#1570f9]">63</b> / 692</span></a>
                <a href="#" class="ml-[18px] flex items-center"><svg class="mr-1 size-[10px]"><use href="#zone"/></svg>Zonas<span class="ml-2 rounded-full bg-[#eceff1] px-1 font-['Roboto',sans-serif] font-normal leading-[13px] text-[#90a4ae]">91</span></a>
                <span class="ml-[19px] mt-[5px] h-1 w-8 rounded-sm border border-[#ddd]"></span>
              </nav>

              <div class="flex h-[34px] items-center pl-[9px] pr-[22px] text-[9px]">
                <svg class="mr-[5px] size-[11px] text-[#607d8b]"><use href="#search"/></svg>
                <input aria-label="Buscar vehículo" placeholder="Buscar" class="h-[19px] w-[100px] rounded-sm border border-[#ccc] bg-white px-1 font-['Roboto',sans-serif] placeholder:text-[#888]">
                <svg class="ml-[12px] mr-[5px] size-[11px] text-[#607d8b]"><use href="#sort"/></svg>
                <div class="relative flex h-[19px] w-[70px] items-center rounded-sm border border-[#ccc] bg-white">
                  <select aria-label="Ordenar por" class="w-full appearance-none pl-1 font-['Roboto',sans-serif] text-[#444]"><option>Visitas</option></select>
                  <svg class="pointer-events-none absolute right-[3px] size-2 text-[#78909c]"><use href="#down"/></svg>
                </div>
                <svg class="ml-3 mr-1 size-[11px] text-[#607d8b]"><use href="#eye"/></svg>
                <button aria-label="Tarjetas" class="grid h-[20px] w-[22px] place-items-center rounded border border-[#4d93fb] bg-[#e0ecfd] text-[#1570f9]"><svg class="size-[11px]"><use href="#grid"/></svg></button>
                <button aria-label="Tabla" class="ml-[5px] grid h-[20px] w-[22px] place-items-center rounded border border-[#dde2e6] bg-[#e9edf0] text-[#a9b7bf]"><svg class="size-[10px]"><use href="#table"/></svg></button>
                <label class="ml-auto flex items-center gap-1 font-['Roboto',sans-serif] font-bold text-[#263238]">
                  <input type="checkbox" checked class="relative h-[11px] w-[22px] appearance-none rounded-full bg-[#1570f9] before:absolute before:right-px before:top-px before:size-[9px] before:rounded-full before:bg-white">Activar toda la flota
                </label>
                <button class="ml-3 flex h-[19px] items-center rounded-full bg-[#ffe4e4] px-2 font-medium text-[#ff3b4e]"><svg class="mr-1 size-[10px]"><use href="#cross"/></svg>Remover Rutas</button>
                <button class="ml-1 flex h-[19px] items-center rounded-full bg-[#e0ecfd] px-[7px] font-medium text-[#1570f9]"><svg class="mr-1 size-[10px]"><use href="#wand"/></svg>Optimizar Rutas</button>
              </div>
              <div class="mb-2 flex h-[129px] justify-between overflow-hidden">
                <div id="fleet" class="grid flex-1 grid-cols-[repeat(auto-fill,150px)] content-start gap-2 pl-[11px] pt-px"></div>
                <div class="h-5 w-[6px] bg-[#c1c1c1]"></div>
              </div>
            </main>

            <div class="w-[9px] shrink-0 border-l border-[#b5b5b5] bg-[#f7f7f7]"></div>
          </div>
        </div>
      </div>

      <!-- keyboard base -->
      <div class="relative -ml-28 -mr-27">
        <div class="flex h-5 justify-center bg-linear-to-b from-[#b3bfd1] to-[#c0ccdb]">
          <div class="h-[17px] w-[190px] rounded-b-2xl bg-linear-to-r from-[#c3cfdf] via-[#dde7f2] to-[#c3cfdf]"></div>
        </div>
        <div class="h-[13px] rounded-[0_0_160px_160px/0_0_13px_13px] bg-linear-to-b from-[#a5b6c8] to-[#bccad9]"></div>
      </div>
    </div>

    <!-- vehicle detail -->
    <aside class="relative z-10 mt-[35px] w-[221px] shrink-0 rounded-md border-l border-[#cfd8e3] bg-[#f8fbff] pb-1 text-[9px] shadow-[0_4px_12px_#d5e5fb]">
      <header class="relative flex h-[33px] items-center border-b border-[#dfe4ea] pl-[15px]">
        <div class="absolute -left-px top-[2px] h-[26px] w-[5px] rounded-sm bg-[#6bdd00]"></div>
        <svg class="mr-[3px] h-2 w-[11px] text-[#a9b7bf]"><use href="#truck"/></svg>
        <h2 class="text-xs font-semibold text-[#333]">Vehículo 1</h2>
      </header>
      <div class="flex h-[25px] items-center gap-[3px] border-b border-[#dfe4ea] pl-[11px]">
        <button aria-label="Opciones" class="grid h-4 w-5 place-items-center rounded-sm bg-[#e9edf0]"><svg class="size-[11px]"><use href="#gear"/></svg></button>
        <button aria-label="Intercambiar" class="grid h-4 w-5 place-items-center rounded-sm bg-[#e9edf0]"><svg class="size-[11px]"><use href="#swap"/></svg></button>
        <button aria-label="Remover" class="grid h-4 w-5 place-items-center rounded-sm bg-[#ffe4e4] text-[#ff3b4e]"><svg class="size-[11px]"><use href="#cross"/></svg></button>
        <button aria-label="Optimizar" class="grid h-4 w-5 place-items-center rounded-sm bg-[#e0ecfd] text-[#1570f9]"><svg class="size-[11px]"><use href="#wand"/></svg></button>
      </div>
      <div class="pl-[11px] pr-[21px] pt-[7px]">
        <div class="mb-[22px] flex gap-1 font-['Roboto',sans-serif] text-[8px]">
          <button class="h-[17px] w-[47px] rounded-full border border-[#4d93fb] bg-[#e0ecfd] text-[#1570f9]">Vehículo</button>
          <button class="flex h-[17px] w-[44px] items-center justify-between rounded-full border border-[#dde2e6] bg-[#e9edf0] pl-[7px] pr-[3px] text-[#90a4ae]">Ruta<span class="size-3 rounded-full bg-[#6bdd00] text-center font-bold leading-3 text-white">5</span></button>
        </div>
        <div id="stats"></div>

        <section class="mb-[7px] mt-[23px] h-[53px] rounded bg-white px-[7px] pt-[6px] shadow-[0_1px_5px_#e3ecf9]">
          <label for="conductor" class="block text-[10px] font-semibold leading-4">Conductor asignado</label>
          <div class="relative flex h-[19px] items-center rounded-sm border border-[#ccc]">
            <select id="conductor" class="w-full appearance-none pl-[9px] font-['Roboto',sans-serif] text-[8px] text-[#444]"><option>Conductor 1</option></select>
            <svg class="pointer-events-none absolute right-[2px] size-[6px]"><use href="#down"/></svg>
          </div>
        </section>

        <div class="rounded bg-white pb-[6px] shadow-[0_1px_5px_#e3ecf9]">
          <table class="w-full text-right font-['Roboto',sans-serif] text-[8px]">
            <thead>
              <tr class="h-7 border-b border-[#eceff1] font-['Inter',sans-serif] text-[9px]">
                <th></th>
                <th class="whitespace-nowrap pr-1 font-semibold"><svg class="mr-[2px] inline size-2 text-[#90a4ae]"><use href="#nodes"/></svg>Distancia</th>
                <th class="whitespace-nowrap pr-[7px] font-semibold"><svg class="mr-[2px] inline size-2 text-[#78909c]"><use href="#watch"/></svg>Tiempo</th>
              </tr>
            </thead>
            <tbody id="legs"></tbody>
            <tfoot>
              <tr class="h-[22px] align-bottom font-bold leading-3"><td class="pl-[7px] text-left font-['Inter',sans-serif]">Total</td><td class="pr-[7px]">1287.96 Km</td><td class="pr-[5px]">02 h 25 m</td></tr>
              <tr class="h-3 leading-3"><td class="pl-[7px] text-left font-['Inter',sans-serif]">Máximo</td><td class="pr-[7px]">250 Km</td><td class="pr-[5px]">08 h 00 m</td></tr>
            </tfoot>
          </table>
        </div>
      </div>
    </aside>
  </div>

  <script>
    // label, x, y of the marker centre; no label means an unassigned stop
    const pins = [
      ["", 317, 86], ["", 489, 106], ["", 58, 207], ["", 113, 223], ["", 153, 230], ["", 10, 224], ["", 24, 218], ["", 79, 248],
      [7, 328, 128], [3, 337, 130], [9, 360, 137], [2, 323, 149], [18, 349, 130], [19, 326, 120], [26, 334, 123], [27, 320, 133], [20, 332, 136], [25, 351, 137], [28, 342, 134],
      [5, 367, 140], [21, 353, 149], [14, 315, 152], [23, 333, 152], [22, 344, 153], [16, 352, 162], [24, 266, 202], [12, 382, 201],
    ];
    document.getElementById("pins").innerHTML = pins.map(([n, x, y]) => `
      <use href="${n ? "#pin-blue" : "#pin-gray"}" x="${x - 7}" y="${y - 7}" width="14" height="17"/>
      <text x="${x}" y="${y + 2}">${n}</text>`).join("");

    // plate, colour, load %, undo colour, has a route
    const fleet = [
      ["112-SGCG-35", "#3d96f0", 93, "#e9edf0", true],
      ["119-SYSF-83", "#414c6e", 52, "#e9edf0", true],
      ["50-DXGS-62", "#fc4089", 0, "#fc4089", false],
      ["65-JSYK-32", "#4a73f8", 0, "#4a73f8", false],
      ["62-KYTC-38", "#9c00ff", 0, "#e9edf0", false],
      ["63-JBRD-31", "#ff6b6b", 0, "#e9edf0", false],
      ["60-KZXZ-74", "#c90000", 0, "#e9edf0", false],
      ["64-LDDJ-33", "#009681", 0, "#e9edf0", false],
    ];
    const bar = (icon, pct) => `
      <div class="flex h-2 items-center"><svg class="mr-1 size-2"><use href="#${icon}"/></svg>
        <div class="h-1 flex-1 overflow-hidden rounded-full bg-[#e9edf0]"><div class="h-1 bg-[#fdd421]" style="width:${pct}%"></div></div>
        <span class="w-[19px] text-right">${pct}%</span></div>`;
    document.getElementById("fleet").innerHTML = fleet.map(([name, color, pct, undo, on]) => `
      <article class="relative h-[74px] rounded border border-[#e2e6ea] bg-white pl-2 pr-[2px] shadow-[0_1px_4px_#d9e2f0]">
        <div class="absolute left-0 top-2 h-[56px] w-[5px] rounded-r-sm" style="background:${color}"></div>
        <header class="flex h-[19px] items-center border-b border-[#eceff1]">
          <svg class="ml-[2px] mr-[3px] h-[10px] w-[7px] text-[#90a4ae]"><use href="#phone"/></svg>
          <h3 class="text-[9px] font-bold">${name}</h3>
          <input type="checkbox" checked aria-label="${name}" class="relative ml-auto h-[11px] w-[22px] appearance-none rounded-full bg-[#1570f9] before:absolute before:right-px before:top-px before:size-[9px] before:rounded-full before:bg-white">
        </header>
        <div class="border-b border-[#eceff1] py-[3px] font-['Roboto',sans-serif] text-[7px] text-[#78909c]">${bar("store", pct)}${bar("scale", 0)}${bar("box", 0)}</div>
        <footer class="flex h-[22px] items-center gap-[5px]">
          <button aria-label="Deshacer" class="mr-auto" style="color:${undo}"><svg class="ml-px size-[9px]"><use href="#undo"/></svg></button>
          <button aria-label="Opciones" class="grid size-4 place-items-center rounded-sm bg-[#e9edf0]"><svg class="size-[11px]"><use href="#gear"/></svg></button>
          <div class="flex gap-[5px] ${on ? "" : "opacity-50"}">
            <button aria-label="Intercambiar" class="grid size-4 place-items-center rounded-sm bg-[#e9edf0]"><svg class="size-[11px]"><use href="#swap"/></svg></button>
            <button aria-label="Remover" class="grid size-4 place-items-center rounded-sm bg-[#ffe4e4] text-[#ff3b4e]"><svg class="size-[11px]"><use href="#cross"/></svg></button>
            <button aria-label="Optimizar" class="grid size-4 place-items-center rounded-sm bg-[#e0ecfd] text-[#1570f9]"><svg class="size-[10px]"><use href="#wand"/></svg></button>
          </div>
        </footer>
      </article>`).join("");

    const stats = [
      ["scale", "Peso", "0", "3.500kg", 0],
      ["box", "Volumen", "0", "10m3", 0],
      ["coin", "Dinero", "0", "$2.500.120,00", 0],
      ["store", "Visitas", "5,00", "25u", 20],
    ];
    document.getElementById("stats").innerHTML = stats.map(([icon, name, used, total, pct]) => `
      <div class="h-[29px] pt-[3px]">
        <div class="mb-[2px] flex h-3 items-center"><svg class="mr-1 size-[10px] text-[#6bdd00]"><use href="#${icon}"/></svg><b class="font-semibold">${name}</b>
          <span class="ml-auto font-['Roboto',sans-serif] text-[8px] text-[#78909c]"><span class="text-[#333]">${used} /</span> ${total}</span><b class="ml-[6px] font-['Roboto',sans-serif] text-[#00cfa0]">${pct}%</b></div>
        <div class="h-[5px] overflow-hidden rounded-full bg-[#e9edf0]"><div class="h-[5px] rounded-full bg-[#00cfa0]" style="width:${pct}%"></div></div>
      </div>`).join("") + `
      <div class="flex h-[18px] items-center pt-[3px]"><svg class="mr-1 size-[10px] text-[#6bdd00]"><use href="#clip"/></svg><b class="font-semibold">Pedidos</b><span class="ml-auto font-['Roboto',sans-serif]">6</span></div>`;

    const stop = (s) => s === "flag"
      ? `<svg class="size-[13px]"><use href="#flag"/></svg>`
      : `<svg class="h-4 w-[15px]" viewBox="0 0 26 28"><use href="#user"/><text x="19" y="25" font-size="9" font-weight="700" text-anchor="middle" fill="#fff">${s}</text></svg>`;
    const legs = [["flag", "1", "298.03 Km", "03 h 51 m"], ["1", "N", "887.32 Km", "0-3 h 26 m"], ["N", "flag", "102.62 Km", "01 h 08 m"]];
    document.getElementById("legs").innerHTML = legs.map(([from, to, km, time]) => `
      <tr class="h-[27px] border-b border-[#eceff1]">
        <td class="pl-3"><div class="flex w-[54px] items-center justify-between text-[#78909c]">${stop(from)}<svg class="size-[11px]"><use href="#arrow"/></svg>${stop(to)}</div></td>
        <td class="pr-[7px]">${km}</td><td class="pr-[5px]">${time}</td>
      </tr>`).join("");
  </script>

</body>

</html>
